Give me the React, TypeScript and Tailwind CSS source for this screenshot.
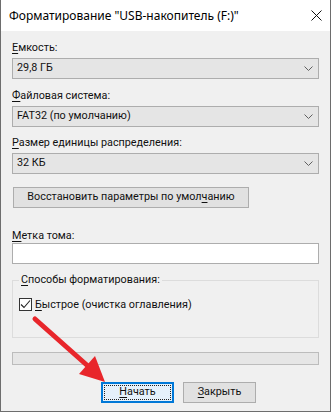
import { ReactNode } from "react";

const bodyFont = { fontFamily: 'Roboto, "Segoe UI", sans-serif' };
const titleFont = { fontFamily: '"Noto Sans", "Segoe UI", sans-serif' };

function Key({ children }: { children: ReactNode }) {
    return <span className="underline underline-offset-2">{children}</span>;
}

function Chevron() {
    return (
        <svg width="9" height="6" viewBox="0 0 9 6" className="text-[#606060]">
            <path d="M0.5 0.5 L4.5 4.5 L8.5 0.5" fill="none" stroke="currentColor" strokeWidth="1" />
        </svg>
    );
}

function Combo({ value }: { value: string }) {
    return (
        <div className="mt-[3px] h-[21px] border border-[#adadad] bg-[#e5e5e5] flex items-center justify-between pl-[4px] pr-[5px]">
            <span>{value}</span>
            <Chevron />
        </div>
    );
}

function Label({ children, className }: { children: ReactNode; className?: string }) {
    return <div className={`h-[15px] leading-[15px] ${className ?? ""}`}>{children}</div>;
}

export default function App() {
    return (
        <div
            style={bodyFont}
            className="relative w-[331px] h-[412px] bg-[#f0f0f0] border-l border-r border-b border-[#6d6d6d] text-[10.8px] text-[#111] overflow-hidden whitespace-nowrap"
        >
            <div
                style={titleFont}
                className="h-[31px] bg-white flex items-center justify-between pl-[8px] pr-[8px] text-[12px] text-black"
            >
                <span>Форматирование "USB-накопитель (F:)"</span>
                <svg width="11" height="11" viewBox="0 0 11 11">
                    <path d="M0.5 0.5 L10.5 10.5 M10.5 0.5 L0.5 10.5" stroke="#111" strokeWidth="1" />
                </svg>
            </div>

            <div className="px-[11px]">
                <Label className="mt-[9px]">
                    <Key>Е</Key>мкость:
                </Label>
                <Combo value="29,8 ГБ" />

                <Label className="mt-[9px]">
                    <Key>Ф</Key>айловая система:
                </Label>
                <Combo value="FAT32 (по умолчанию)" />

                <Label className="mt-[8px]">
                    <Key>Р</Key>азмер единицы распределения:
                </Label>
                <Combo value="32 КБ" />

                <button className="mt-[13px] ml-[1px] w-[236px] h-[21px] border border-[#adadad] bg-[#e1e1e1] flex items-center justify-center">
                    <span>
                        Восстановить параметры по умол<Key>ч</Key>анию
                    </span>
                </button>

                <Label className="mt-[20px]">
                    <Key>М</Key>етка тома:
                </Label>
                <div className="h-[21px] border border-[#adadad] bg-white" />

                <div className="relative mt-[16px] h-[58px] border border-[#dcdcdc]">
                    <div className="absolute -top-[9px] left-[6px] px-[2px] bg-[#f0f0f0] leading-[15px]">
                        <Key>С</Key>пособы форматирования:
                    </div>
                    <div className="mt-[16px] ml-[6px] flex items-center gap-[3px]">
                        <div className="w-[13px] h-[13px] border border-[#333] bg-white flex items-center justify-center">
                            <svg width="11" height="11" viewBox="0 0 11 11">
                                <path d="M1 5.5 L4 8.5 L10 1.5" fill="none" stroke="#222" strokeWidth="1.1" />
                            </svg>
                        </div>
                        <span className="leading-[15px]">
                            <Key>Б</Key>ыстрое (очистка оглавления)
                        </span>
                    </div>
                </div>

                <div className="mt-[14px] h-[13px] border border-[#bcbcbc] bg-[#e6e6e6]" />

                <div className="mt-[17px] flex gap-[9px] pl-[89px]">
                    <button className="w-[73px] h-[21px] border-2 border-[#0078d7] bg-[#e5f1fb] p-[1px]">
                        <div className="w-full h-full border border-dotted border-[#222] flex items-center justify-center">
                            <span>
                                <Key>Н</Key>ачать
                            </span>
                        </div>
                    </button>
                    <button className="w-[73px] h-[21px] border border-[#adadad] bg-[#e1e1e1] flex items-center justify-center">
                        <span>
                            <Key>З</Key>акрыть
                        </span>
                    </button>
                </div>
            </div>

            <svg className="absolute left-0 top-0 pointer-events-none" width="331" height="412">
                <line x1="34" y1="319" x2="88" y2="367" stroke="#e8262b" strokeWidth="5" strokeLinecap="round" />
                <polygon points="104,382 78,374 94,356" fill="#e8262b" />
            </svg>
        </div>
    );
}
